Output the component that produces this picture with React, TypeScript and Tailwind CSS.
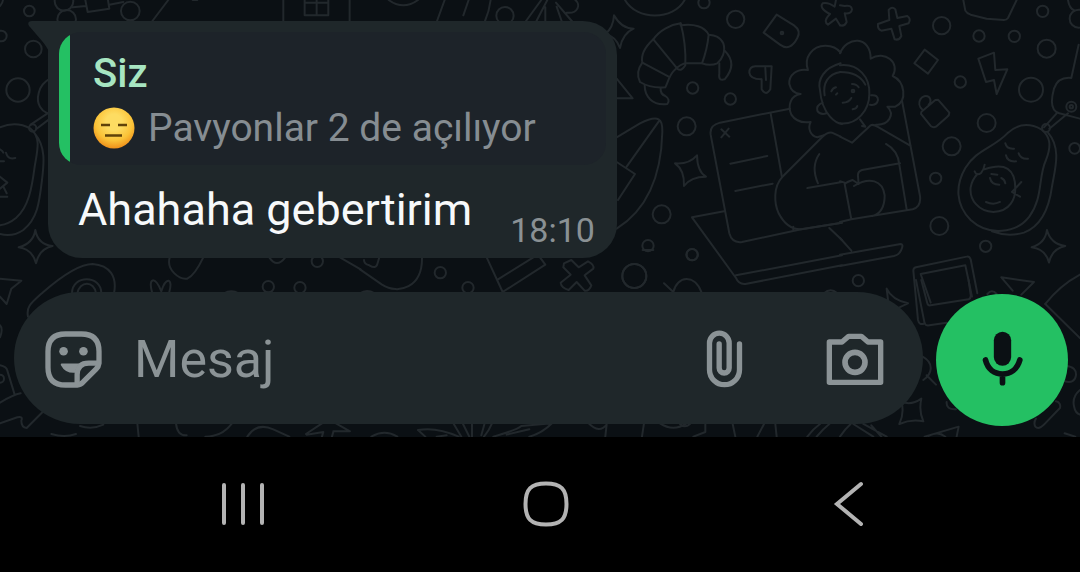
import type { ReactNode } from 'react'

interface Message {
  id: string
  text: string
  time: string
  quote: {
    author: string
    text: string
  }
}

const messages: Message[] = [
  {
    id: '1',
    text: 'Ahahaha gebertirim',
    time: '18:10',
    quote: { author: 'Siz', text: 'Pavyonlar 2 de açılıyor' },
  },
]

// Doodle tiles are drawn at three times their size, so every tile is scaled down by a third
function Tile({ x, y, children }: { x: number; y: number; children: ReactNode }) {
  return <g transform={`translate(${x} ${y}) scale(0.3333)`}>{children}</g>
}

function Dots({ items }: { items: number[][] }) {
  return (
    <>
      {items.map(([cx, cy, r]) => (
        <circle key={`${cx}-${cy}-${r}`} cx={cx} cy={cy} r={r} />
      ))}
    </>
  )
}

function Wallpaper() {
  return (
    <svg
      className="absolute inset-0 h-full w-full text-[#22282c]"
      viewBox="0 0 1080 437"
      preserveAspectRatio="xMinYMin slice"
      fill="none"
      stroke="currentColor"
      strokeWidth="6"
      strokeLinecap="round"
      strokeLinejoin="round"
      aria-hidden="true"
    >
      <Tile x={0} y={0}>
        <Dots items={[[88, 33, 16], [4, 108, 16], [100, 147, 25], [54, 270, 35], [192, 4, 28], [200, 58, 28], [391, 33, 28], [98, 384, 11]]} />
        <path d="M0 18Q8 10 9 0M218 22L258 18M256 0L263 36L328 26L324 0M328 14L370 6M505 0L455 66M578 0h14" />
        <path d="M850 0V66M1049 0V66M914 0V46H985V0M914 8H985M950 0V46" />
        <path d="M150 236C112 256 108 300 120 320C130 338 150 344 160 342M92 374L146 338M108 388L150 356" />
        <path d="M0 382Q48 362 92 386C124 412 112 452 104 500C96 562 86 622 48 654Q26 672 0 676M104 400C138 440 132 490 126 540C118 610 112 656 70 690Q38 712 0 702" />
        <path d="M0 448Q8 452 10 458M18 458Q24 480 46 474M0 484h12M0 530L22 548L0 566M10 560L20 580M0 590H22" />
        <path d="M106 690Q114 734 158 738Q118 746 108 790Q98 748 56 742Q100 730 106 690Z" />
      </Tile>
      <Tile x={300} y={0}>
        <path d="M434 0L410 66M506 0L490 46M572 0Q568 34 554 66M724 0L676 66M742 0L708 66M736 22V66M768 8L818 66M770 20L786 66M800 38C836 42 842 12 826 0M266 0Q310 32 354 0" />
        <circle cx="615" cy="47" r="26" />
      </Tile>
      <Tile x={600} y={0}>
        <Dots items={[[312, 8, 17], [407, 58, 26], [278, 264, 17], [391, 297, 17], [260, 379, 27], [185, 643, 27], [144, 737, 17], [277, 764, 17], [103, 828, 36]]} />
        <path d="M75 0C110 62 220 62 254 0" />
        <path d="M42 46Q64 86 101 86Q68 100 60 144Q48 110 16 102Q40 82 42 46Z" />
        {/* croissant */}
        <path d="M242 70C210 74 178 92 160 118C134 142 122 164 127 188C112 208 112 230 120 246C146 262 172 264 196 262C204 246 208 226 222 212C232 200 250 188 262 190H306C322 196 338 196 352 190C366 178 378 154 370 130C360 108 342 106 326 104C314 80 282 70 242 76Z" />
        <path d="M242 70C252 108 258 150 256 196Q244 216 232 206L160 118M127 188L206 230M326 104Q322 148 306 190M374 152C398 176 402 206 374 238Q354 244 358 220V190M134 256C134 288 156 318 202 312Q212 298 196 288Q180 282 182 264" />
        <path d="M50 236L98 295H50" />
        {/* surfboard */}
        <path d="M50 412L120 370Q160 350 176 358Q188 364 187 396C184 520 146 626 50 686M178 362L80 500M50 486L105 522L54 600" />
        <path d="M530 44L582 76Q604 92 592 114Q570 156 540 134L491 98Z" />
        <circle cx="546" cy="99" r="4" />
        <path d="M515 199H466Q448 200 448 218Q450 238 484 238M515 199L511 268Q498 290 485 268V238M496 204L498 240" />
        <path d="M291 466Q292 516 318 530Q272 530 252 558Q254 510 225 490Q266 494 291 466Z" />
        <path d="M690 42Q668 64 684 74L708 56L720 76M690 42Q656 24 668 10Q684 6 704 20L708 0" />
        {/* laptop */}
        <path d="M570 326L360 368Q328 376 332 404L388 700Q396 730 426 726L604 688L726 668M512 340L546 532M364 388L388 410M386 386L364 412M391 491L502 468M406 573L518 551M372 634L276 652L408 834Q416 854 436 852L726 796M408 826L726 766M688 684L726 720" />
        <path d="M722 410L696 398Q682 396 666 412L546 532C520 560 522 610 536 640Q562 690 604 688L726 668M580 690V680M658 462Q632 500 654 550M622 564L726 546" />
        {/* curls */}
        <path d="M722 158C700 130 652 130 630 160Q614 182 624 210C590 204 566 226 568 252Q574 280 602 282C572 286 562 316 574 344Q592 372 632 366C622 386 632 408 652 412L672 406M722 190C672 204 652 238 660 270Q664 320 690 350Q708 370 726 372M722 216C684 222 668 250 674 286M668 308Q648 316 652 332Q660 346 680 340M694 274Q698 264 708 262M708 284L712 280" />
        <path d="M192 850L220 876C232 826 284 822 304 876M672 880Q692 862 712 880" />
      </Tile>
      <Tile x={840} y={0}>
        <Dots items={[[305, 77, 26], [417, 108, 17], [523, 109, 17], [608, 34, 17], [620, 146, 27], [361, 246, 17], [573, 269, 36], [440, 369, 27], [335, 439, 27], [287, 535, 17], [298, 678, 27], [437, 739, 17], [55, 842, 17], [704, 445, 16], [716, 56, 27], [694, 320, 15], [694, 320, 5], [618, 384, 12]]} />
        <path d="M370 0L376 32Q380 40 392 44L440 56L492 60Q500 60 504 54L530 0M684 0Q688 26 704 32" />
        <path d="M0 16L14 18Q34 14 36 28Q34 42 14 40L20 66Q14 80 0 76" />
        <path d="M146 30Q156 18 166 28L172 54L202 48Q214 56 206 70L178 78L184 108Q178 122 164 118L154 86L124 92Q112 88 114 72L148 60Z" />
        <path d="M254 149L294 180L264 221L223 190Z" />
        <path d="M415 176L462 158L466 210L502 208L470 282L462 240L438 246Z" />
        <path d="M294 299L328 338Q328 346 322 350L288 380Q280 384 272 378L243 342Q242 336 248 332L286 300ZM248 330C224 308 248 278 268 292Q276 304 266 314" />
        {/* curls and shoulders */}
        <path d="M0 160C20 108 92 106 92 176C134 150 182 188 158 228C194 244 204 302 166 320L142 320C166 344 146 376 108 374M0 196C56 190 90 232 88 282C88 330 52 376 0 370M0 216C38 216 64 230 76 254M94 286Q114 284 114 300Q110 318 90 314M60 358L76 380L66 378M36 252Q50 252 56 262M8 308Q26 308 34 294M38 328Q50 326 52 318" />
        <circle cx="39" cy="273" r="4" />
        <path d="M0 410L36 428L92 376Q100 372 112 380L212 438M186 302L240 588Q244 620 218 628L34 658L0 666M138 432Q174 452 178 494L200 628M180 490L66 510Q52 514 54 530L56 552L38 540Q20 546 14 552L34 658M0 544L14 548M42 558C88 530 128 540 134 586Q134 638 98 648M0 714L34 752M0 764L182 732Q190 732 186 744Q180 764 162 768L0 798" />
        {/* avocado */}
        <path d="M604 388C568 368 532 372 502 400C460 444 410 448 376 504C346 556 346 614 392 660C446 710 530 700 568 650C610 592 594 532 618 480C636 434 630 410 604 388ZM624 398C666 446 644 510 636 560C626 634 600 680 552 698Q504 712 456 694" />
        <path d="M404 514Q410 530 424 518Q432 508 434 494M434 508Q526 476 526 566C526 594 512 634 460 636C416 634 388 600 392 562Q396 540 412 522M496 430Q500 448 522 446M498 466Q502 486 528 484M536 460Q542 478 564 476M450 534Q454 554 478 554M484 534Q494 538 496 550M454 522L472 524M438 606Q460 616 480 606M544 546L516 576L540 590" />
        <path d="M716 134L694 234Q654 230 642 266Q624 330 658 340L720 356M650 340L612 382M684 340L628 386" />
        <path d="M621 690Q632 732 676 738Q636 746 627 788Q618 748 575 742Q616 730 621 690Z" />
        {/* picture frame */}
        <path d="M254 970Q238 978 234 960L220 812Q220 804 228 802L380 770Q388 768 392 778L412 880M272 908L242 822L376 796L396 890" />
        <path d="M140 866Q156 900 204 910Q180 920 166 930M140 866L144 900M484 832L582 846L544 884M484 832L518 872M442 882Q456 866 470 882M720 824Q660 856 616 912" />
      </Tile>
      <Tile x={0} y={250}>
        <path d="M0 86L64 92L34 116L20 162L0 140M84 200C78 170 92 160 130 126C190 74 240 42 278 42C330 46 352 80 342 130M216 130C216 74 304 74 304 130M232 130C238 92 284 92 288 130M456 126C444 84 464 76 484 124C498 78 520 84 508 126" />
        <path d="M510 20C496 60 540 90 562 86Q584 76 610 22M808 22Q830 56 856 22M1020 22L1082 58M672 130Q694 118 716 130" />
        <Dots items={[[952, 34, 17], [805, 110, 17], [900, 113, 17], [0, 386, 12]]} />
        <path d="M0 226Q10 236 0 262M0 346Q20 350 22 362L44 434M0 458Q40 434 62 430M0 520L52 502Q70 498 64 512Q64 532 80 534L130 484M240 528Q276 540 310 524M154 552Q194 564 228 552M412 520L416 560M528 520Q532 558 560 556M616 560Q666 560 696 520M742 560Q770 516 820 538L868 560M918 552L966 520M920 554L970 546L966 560M1000 544H1050L1008 520M1000 546L996 560" />
      </Tile>
      <Tile x={360} y={250}>
        <Dots items={[[241, 68, 17], [324, 113, 17], [823, 78, 36], [996, 14, 17]]} />
        <path d="M0 58L66 104C116 136 188 112 186 22M12 30Q12 42 28 46Q48 58 52 42L58 22M380 22L428 126L556 44L540 22M414 88L520 22M848 0h32" />
        <path d="M612 40L634 30L656 52L684 34Q704 44 700 56L674 76L694 106Q688 124 674 122L650 96L626 120Q604 114 602 98L632 74L610 52Z" />
        <path d="M0 130Q20 116 44 130M34 560Q74 536 112 560M174 540Q230 530 296 560M174 540L196 560M280 520L304 560M308 520L328 560M336 520V560M374 520L364 556M396 520Q388 540 372 560M400 560Q470 540 484 528L576 520Q546 550 508 560M230 560L260 556M440 554L508 538M686 520Q718 552 740 524L736 560M852 520L846 560M900 520Q940 546 980 520" />
      </Tile>
      <Tile x={680} y={280}>
        <path d="M708 0L734 130Q738 138 748 136L800 128M724 0L742 70Q744 78 752 76L866 58Q874 54 872 44L866 0M1096 72L1200 174" />
        <path d="M728 230C764 250 756 282 730 300M740 286L768 314M1158 258Q1190 260 1188 286Q1184 312 1154 304M1200 330Q1176 350 1182 378Q1186 400 1200 404M800 366Q798 390 828 388" />
        <path d="M664 364Q692 378 724 356Q716 394 730 424Q694 416 658 432Q674 400 664 364ZM1128 364Q1144 368 1140 384L1092 434Q1076 450 1066 440Q1060 428 1068 416M734 470L836 440L830 470M746 468Q774 452 796 470M1154 460L1186 470" />
        <path d="M0 432Q14 446 30 432M76 432V456L40 470M158 432L166 470M252 432L232 470M286 432L290 470M382 470Q400 446 420 432M410 470Q430 446 448 432M480 470Q496 446 512 432M520 432L580 470M550 432L620 470M574 436L604 470" />
      </Tile>
    </svg>
  )
}

function ExpressionlessFace() {
  return (
    <svg className="h-[42px] w-[42px] shrink-0" viewBox="0 0 42 42" role="img" aria-label="😑">
      <defs>
        <radialGradient id="face" cx="0.5" cy="0.36" r="0.66">
          <stop offset="0.3" stopColor="#fddc62" />
          <stop offset="0.68" stopColor="#fbc338" />
          <stop offset="1" stopColor="#ee8a17" />
        </radialGradient>
      </defs>
      <circle cx="21" cy="21" r="20.5" fill="url(#face)" />
      <path d="M8 18H17M25 18H34M12 28.5H29" stroke="#5f4209" strokeWidth="2.4" />
    </svg>
  )
}

function MessageBubble({ message }: { message: Message }) {
  return (
    <div className="relative ml-12 w-fit rounded-[34px] rounded-tl-none bg-[#1f272a] px-[11px] pt-[11px] pb-2">
      <svg className="absolute top-0 -left-5 h-8 w-[21px]" viewBox="0 0 21 32" fill="#1f272a" aria-hidden="true">
        <path d="M4 0H21V32C20 27 17 24 14 20L2 6C-1 3 0 0 4 0Z" />
      </svg>
      <blockquote className="overflow-hidden rounded-[22px] bg-[#1d2329]">
        <div className="border-l-[11px] border-[#24c063] pt-[15px] pb-2.5 pl-[23px] leading-[54px]">
          <div className="text-[40px] font-medium text-[#a7e5c1]">{message.quote.author}</div>
          <div className="flex items-center gap-[13px] text-[39px] text-[#868d92]">
            <ExpressionlessFace />
            <span>{message.quote.text}</span>
          </div>
        </div>
      </blockquote>
      <div className="mt-[18px] flex items-end justify-between gap-[38px] pr-[11px] pl-[19px]">
        <p className="mb-[13px] text-[45px] leading-[54px] text-[#f7f9fa]">{message.text}</p>
        <time className="text-[34px] leading-10 text-[#8a9194]">{message.time}</time>
      </div>
    </div>
  )
}

function StickerIcon() {
  return (
    <svg className="h-[57px] w-[57px]" viewBox="42 29 172 172" fill="none" stroke="currentColor" strokeWidth="16" strokeLinejoin="round">
      <path d="M139 192H104Q51 192 51 139V91Q51 38 104 38H152Q205 38 205 91V126Q204 136 196 144L158 182Q150 191 139 192Z" />
      <path d="M139 190V160Q140 126 174 126H204" />
      <path d="M92 127H146Q134 138 134 155Q104 158 90 132Q88 127 92 127Z" fill="currentColor" stroke="none" />
      <circle cx="98" cy="90" r="13" fill="currentColor" stroke="none" />
      <circle cx="158" cy="90" r="13" fill="currentColor" stroke="none" />
    </svg>
  )
}

function PaperclipIcon() {
  return (
    <svg className="h-[58px] w-[37px]" viewBox="78 148 110 174" fill="none" stroke="currentColor" strokeWidth="16" strokeLinecap="round">
      <path d="M178 190V267A45 45 0 0 1 88 267V187A29.5 29.5 0 0 1 147 187V262A15 15 0 0 1 117 262V190" />
    </svg>
  )
}

function CameraIcon() {
  return (
    <svg className="h-[53px] w-[58px]" viewBox="438 158 174 159" fill="none" stroke="currentColor" strokeWidth="16" strokeLinejoin="round">
      <path d="M448 185H486L506 168H544L564 185H602V306H448Z" />
      <circle cx="525" cy="246" r="30" strokeWidth="17" />
    </svg>
  )
}

function MicIcon() {
  return (
    <svg className="h-[55px] w-[41px]" viewBox="905 153 122 165" fill="none" stroke="currentColor" strokeWidth="17" strokeLinecap="round">
      <rect x="940" y="155" width="52" height="102" rx="26" fill="currentColor" stroke="none" />
      <path d="M915 240C922 268 942 282 966 282S1010 268 1018 240M966 286V308" />
    </svg>
  )
}

function Composer() {
  return (
    <form className="relative mt-[34px] flex items-start gap-[13px] pr-3 pl-3.5" onSubmit={(e) => e.preventDefault()}>
      <div className="flex h-[132px] min-w-0 flex-1 items-center rounded-full bg-[#1f272a] pt-0.5 pr-[39px] pl-[31px] text-[#8b9396]">
        <button type="button" aria-label="Çıkartmalar" className="shrink-0">
          <StickerIcon />
        </button>
        <input
          type="text"
          aria-label="Mesaj"
          placeholder="Mesaj"
          className="ml-8 min-w-0 flex-1 bg-transparent pt-0.5 text-[52px] leading-[60px] text-white outline-none placeholder:text-[#8b9396]"
        />
        <button type="button" aria-label="Ekle" className="shrink-0">
          <PaperclipIcon />
        </button>
        <button type="button" aria-label="Kamera" className="ml-[83px] shrink-0">
          <CameraIcon />
        </button>
      </div>
      <button
        type="button"
        aria-label="Sesli mesaj"
        className="mt-0.5 flex h-[132px] w-[132px] shrink-0 items-center justify-center rounded-full bg-[#24c063] pb-1 text-[#0b1014]"
      >
        <MicIcon />
      </button>
    </form>
  )
}

function NavigationBar() {
  return (
    <nav className="grid h-[135px] grid-cols-3 place-items-center bg-black pr-20 pb-0.5 pl-[92px] text-[#b3b3b3]">
      <button type="button" aria-label="Son uygulamalar">
        <svg className="h-12 w-12" viewBox="0 0 48 48" fill="none" stroke="currentColor" strokeWidth="4" strokeLinecap="round">
          <path d="M5 5V43M24 5V43M43 5V43" />
        </svg>
      </button>
      <button type="button" aria-label="Ana ekran">
        <svg className="h-12 w-12" viewBox="0 0 48 48" fill="none" stroke="currentColor" strokeWidth="4">
          <path d="M24 3.5C39 3.5 44.500 9 44.500 24S39 44.500 24 44.500S3.500 39 3.500 24S9 3.500 24 3.500Z" />
        </svg>
      </button>
      <button type="button" aria-label="Geri">
        <svg className="h-12 w-12" viewBox="0 0 48 48" fill="none" stroke="currentColor" strokeWidth="4" strokeLinecap="round">
          <path d="M36 4L12 24L36 44" />
        </svg>
      </button>
    </nav>
  )
}

export default function App() {
  return (
    <div className="min-h-screen bg-black font-[Roboto,'Noto_Sans',sans-serif]">
      <main className="relative overflow-hidden bg-[#0b1014] pt-[21px] pb-[11px]">
        <Wallpaper />
        {messages.map((message) => (
          <MessageBubble key={message.id} message={message} />
        ))}
        <Composer />
      </main>
      <NavigationBar />
    </div>
  )
}
